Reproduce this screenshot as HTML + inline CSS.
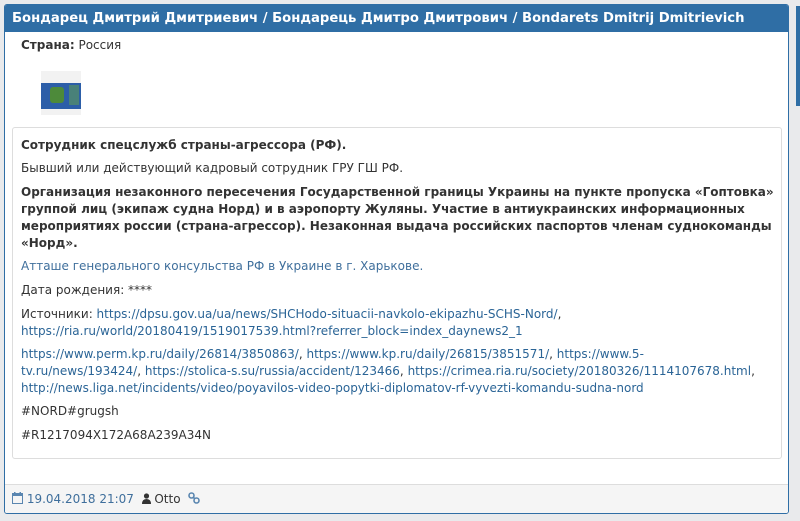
<!DOCTYPE html>
<html><head><meta charset="utf-8"><style>
body{margin:0;width:800px;height:521px;background:#e9eaec;font-family:"DejaVu Sans","Liberation Sans",sans-serif;font-size:12px;color:#333;position:relative;overflow:hidden}
.panel{position:absolute;left:4px;top:4px;width:785px;height:510px;background:#fff;border:1px solid #2f6ea5;border-radius:3px;box-sizing:border-box;overflow:hidden}
.hd{background:#2f6ea5;color:#fff;font-weight:bold;font-size:13.2px;height:27px;line-height:27px;padding-left:7px;white-space:nowrap}
.p{position:absolute;white-space:nowrap;line-height:17px}
.box{position:absolute;left:7px;top:122px;width:770px;height:332px;border:1px solid #ddd;border-radius:3px;box-sizing:border-box}
a{color:#2a6496;text-decoration:none}
.ft{position:absolute;left:0;right:0;top:479px;bottom:0;background:#f5f5f5;border-top:1px solid #ddd}
.side{position:absolute;left:796px;top:6px;width:4px;height:100px;background:#2f6ea5}
</style></head><body>
<div class="side"></div>
<div class="panel">
<div class="hd">Бондарец Дмитрий Дмитриевич / Бондарець Дмитро Дмитрович / Bondarets Dmitrij Dmitrievich</div>
<div class="p" style="left:16px;top:32px"><b>Страна:</b> Россия</div>
<div style="position:absolute;left:36px;top:66px;width:40px;height:44px;background:#f2f2f2">
<div style="position:absolute;left:0;top:12px;width:40px;height:26px;background:#2c5ea8"></div>
<div style="position:absolute;left:9px;top:16px;width:14px;height:16px;background:#4d8a3a;border-radius:3px"></div>
<div style="position:absolute;left:28px;top:14px;width:10px;height:20px;background:#5e9a5a;opacity:.6"></div>
</div>
<div class="box">
<div class="p" style="left:8px;top:9px"><b>Сотрудник спецслужб страны-агрессора (РФ).</b></div>
<div class="p" style="left:8px;top:32px">Бывший или действующий кадровый сотрудник ГРУ ГШ РФ.</div>
<div class="p" style="left:8px;top:56px;font-weight:bold">Организация незаконного пересечения Государственной границы Украины на пункте пропуска «Гоптовка»<br>группой лиц (экипаж судна Норд) и в аэропорту Жуляны. Участие в антиукраинских информационных<br>мероприятиях россии (страна-агрессор). Незаконная выдача российских паспортов членам суднокоманды<br>«Норд».</div>
<div class="p" style="left:8px;top:130px;color:#3f6f9c">Атташе генерального консульства РФ в Украине в г. Харькове.</div>
<div class="p" style="left:8px;top:154px">Дата рождения: ****</div>
<div class="p" style="left:8px;top:178px">Источники: <a>https://dpsu.gov.ua/ua/news/SHCHodo-situacii-navkolo-ekipazhu-SCHS-Nord/</a>,<br><a>https://ria.ru/world/20180419/1519017539.html?referrer_block=index_daynews2_1</a></div>
<div class="p" style="left:8px;top:218px"><a>https://www.perm.kp.ru/daily/26814/3850863/</a>, <a>https://www.kp.ru/daily/26815/3851571/</a>, <a>https://www.5-</a><br><a>tv.ru/news/193424/</a>, <a>https://stolica-s.su/russia/accident/123466</a>, <a>https://crimea.ria.ru/society/20180326/1114107678.html</a>,<br><a>http://news.liga.net/incidents/video/poyavilos-video-popytki-diplomatov-rf-vyvezti-komandu-sudna-nord</a></div>
<div class="p" style="left:8px;top:275px">#NORD#grugsh</div>
<div class="p" style="left:8px;top:299px">#R1217094X172A68A239A34N</div>
</div>
<div class="ft">
<div class="p" style="left:7px;top:6px;color:#3f6f9c"><svg width="11" height="12" viewBox="0 0 11 12" style="vertical-align:-1px"><rect x="0.5" y="1.5" width="10" height="10" fill="none" stroke="#5a86b0"/><rect x="0.5" y="1.5" width="10" height="2.5" fill="#5a86b0"/><rect x="2" y="0" width="1.5" height="3" fill="#5a86b0"/><rect x="7.5" y="0" width="1.5" height="3" fill="#5a86b0"/></svg> 19.04.2018 21:07 &nbsp;<span style="color:#333"><svg width="9" height="11" viewBox="0 0 9 11" style="vertical-align:-1px"><circle cx="4.5" cy="3" r="2.6" fill="#333"/><path d="M0 11 Q0 6 4.5 6 Q9 6 9 11Z" fill="#333"/></svg> Otto</span> &nbsp;<svg width="12" height="12" viewBox="0 0 12 12" style="vertical-align:-1px"><circle cx="3.5" cy="3.5" r="2.5" fill="none" stroke="#5a86b0" stroke-width="1.6"/><circle cx="8.5" cy="8.5" r="2.5" fill="none" stroke="#5a86b0" stroke-width="1.6"/><path d="M5 5 L7 7" stroke="#5a86b0" stroke-width="1.6"/></svg></div>
</div>
</div>
</body></html>
